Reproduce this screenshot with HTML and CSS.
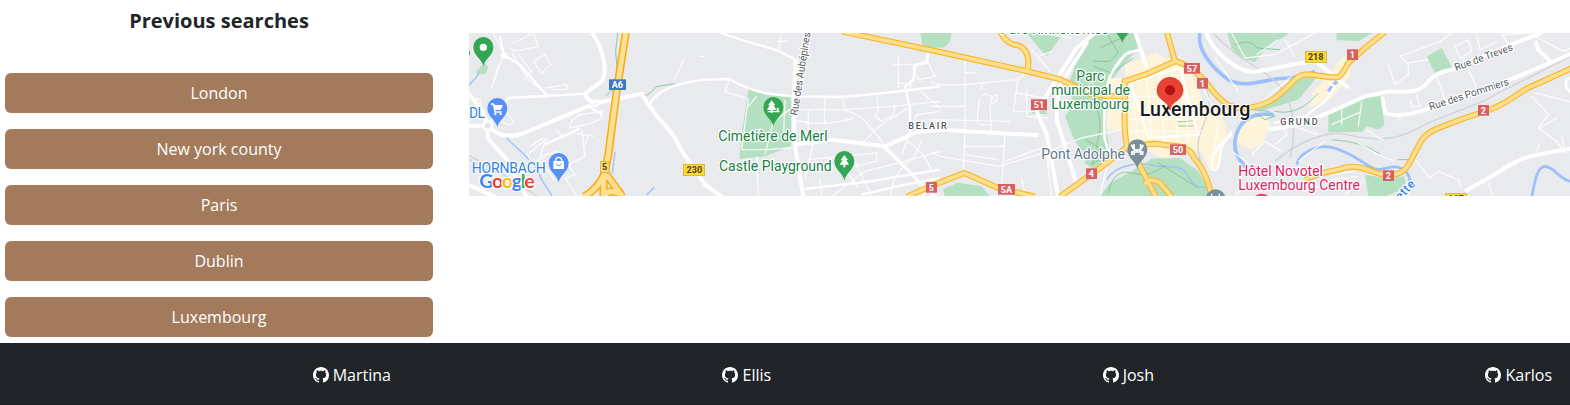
FILE: index.html
```html
<!DOCTYPE html>
<html lang="en">
<head>
<meta charset="utf-8">
<title>Previous searches</title>
<link rel="stylesheet" href="styles.css">
</head>
<body>
<main class="content">
  <section class="history">
    <h5 class="history-title">Previous searches</h5>
    <div class="history-list">
      <button class="city">London</button>
      <button class="city">New york county</button>
      <button class="city">Paris</button>
      <button class="city">Dublin</button>
      <button class="city">Luxembourg</button>
    </div>
  </section>
  <section class="map-panel">
    <svg class="map" viewBox="12 15 3303 489" preserveAspectRatio="none">
      <defs>
        <path id="pin" d="M0,58C-4,36 -30,26 -30,0A30,30 0 1 1 30,0C30,26 4,36 0,58Z"/>
        <path id="tree" d="M0,-19L11,-4H6L14,10H3V18H-3V10H-14L-6,-4H-11Z"/>
        <g id="main-roads">
          <path d="M1130,10L1425,72L1683,129L1785,154Q1830,175 1870,197L1930,205H1977"/>
          <path d="M1605,10Q1625,50 1660,52Q1700,70 1687,128"/>
          <path d="M1325,506L1400,473L1498,435L1600,480L1710,506"/>
          <path d="M1785,506L1925,405L1985,358L2010,385L2072,506M1986,355C1970,280 1985,230 1978,160L2040,140L2130,100L2105,10"/>
          <path d="M1992,360Q2070,340 2100,352Q2175,350 2187,390Q2225,430 2240,506"/>
          <path d="M2130,98Q2195,120 2240,185C2270,220 2290,243 2340,240C2410,235 2440,205 2485,160C2520,120 2550,150 2620,148Q2635,135 2650,105L2700,60L2760,12"/>
          <path d="M2040,470Q2050,445 2085,465L2120,506"/>
          <path d="M2520,455Q2560,435 2620,425C2680,400 2715,435 2760,440C2830,448 2835,395 2860,355C2880,305 2925,300 3000,270L3080,243C3150,215 3160,190 3200,175L3330,116"/>
        </g>
        <g id="motorway">
          <path d="M483,10L455,190L430,380L417,445L415,506"/>
          <path d="M417,440Q400,480 358,506M425,440L472,506M420,506Q425,478 472,500"/>
        </g>
      </defs>
      <rect class="land" x="12" y="15" width="3303" height="489"/>

      <g class="park">
        <path d="M40,122L60,105Q78,118 60,138L35,140V125L50,122Z"/>
        <path d="M850,183L908,202L978,207V355L900,385L823,392L830,320Z"/>
        <path d="M1365,10H1458Q1462,40 1440,57Q1410,65 1372,50Z"/>
        <path d="M1680,10H1800L1745,85L1714,50Z"/>
        <path d="M1830,85L1860,40L1900,10H2015L2028,55L1975,110L1930,170L1918,240L1925,310L1935,375L1885,425L1860,405V385L1825,330L1800,265L1825,230L1810,170L1825,130Z"/>
        <path d="M1695,245L1745,238V258H1705Z"/>
        <path d="M1435,483L1478,464L1550,475L1575,506H1440Z"/>
        <path d="M1905,506L1935,465L2000,430L2060,392L2145,390L2200,430L2245,506Z"/>
        <path d="M2285,10H2480L2400,65L2370,102L2325,90L2300,60Z"/>
        <path d="M2370,240L2450,190L2485,150L2535,130L2560,142L2500,215L2390,248Z"/>
        <path d="M2615,10H2730L2680,40L2615,36Z"/>
        <path d="M2885,85L2930,60L2962,120L2910,135Z"/>
        <path d="M2590,262L2695,210L2750,205L2758,290L2740,305L2705,295L2690,312L2590,312Z"/>
        <path d="M2700,440L2770,452L2818,445L2822,480L2760,506H2710Z"/>
      </g>
      <g class="town">
        <path d="M1980,110L2075,75L2100,92H2155L2195,170L2220,235L2270,260L2285,310L2260,425L2235,428L2210,370L2090,390L1985,340Z"/>
        <path d="M1930,150H1970V303L1925,305Z"/>
        <path d="M2315,300L2345,275L2405,250L2415,290L2395,345L2360,365L2330,355L2310,330Z"/>
        <path d="M2545,190L2595,135L2620,100L2655,70L2655,145L2600,210L2530,240Z"/>
      </g>

      <g class="water">
        <path d="M2205,15C2195,60 2235,115 2290,155C2345,185 2400,150 2470,150Q2520,145 2550,130"/>
        <path d="M2425,260C2350,250 2315,290 2310,340S2340,410 2360,440"/>
        <path class="stream" d="M1925,455C1960,400 2040,405 2065,412S2145,410 2160,430S2190,490 2230,475"/>
        <path class="narrow" d="M2495,410C2505,370 2560,350 2600,358C2660,372 2690,405 2720,418C2750,435 2770,410 2800,418Q2835,430 2835,465L2810,506"/>
        <path d="M2590,190L2615,160V145"/>
        <path class="narrow" d="M3200,506C3208,470 3215,415 3240,415C3275,420 3280,455 3320,460"/>
        <path class="stream" d="M8,175Q40,145 40,135M125,330C175,380 210,400 230,455L262,506M450,372L442,435M545,500L568,478"/>
      </g>

      <g class="rail">
        <path d="M2245,15C2300,80 2370,110 2425,155C2500,220 2490,330 2475,390"/>
        <path d="M2222,180C2260,250 2190,300 2200,370Q2205,410 2220,430M2430,400C2500,340 2560,320 2620,315C2690,330 2770,350 2850,305S3040,235 3100,195L3330,78"/>
        <path d="M-12,370L100,430L220,506M-12,380L80,435"/>
      </g>

      <g class="trail">
        <path d="M458,15L452,70L456,120L445,185L420,205M532,209Q560,195 575,176L628,167"/>
        <path d="M1885,100H1935L1960,75L1925,15M1885,115L1940,135L2005,90M1895,240Q1915,290 1895,350L1905,400M1860,335L1905,360L1880,410L1930,375M1905,60L1990,20"/>
        <path d="M2360,245L2410,250L2430,265L2400,275L2370,255M2430,250Q2500,265 2560,195M2140,294H2185M2135,282L2190,278M2310,50Q2360,30 2375,60L2445,65"/>
        <path d="M2600,335Q2690,340 2745,378M2798,395H2850M1930,495Q1945,420 2000,435T2100,412M2080,405L2200,480"/>
      </g>

      <g class="lane">
        <path d="M85,15L100,45L120,85M140,48L205,15L220,55L150,70L135,60M140,75L190,155L250,200M175,155L200,130L160,80M205,100L240,80L258,110L230,135L205,100M240,180L305,170L308,185H255M-12,200L45,215V270M100,110L80,180L110,95M-12,140L20,210"/>
        <path d="M105,265L120,245L145,280L135,292L105,280M190,380L245,330L225,385L280,370M185,375L200,405L245,385M195,355L235,330M315,300Q310,280 345,260L410,250V270L380,285L315,300M350,305L360,385L310,410L330,440L300,450L333,500M240,350L325,315L388,325M275,305L290,325M370,325L360,352M550,235Q580,180 660,165L720,155M628,155L658,92M230,400L270,460"/>
        <path d="M793,155L780,190L838,210M935,40H970M950,15L940,68M705,85H720M830,365H900L975,360M850,210L830,365M875,205L845,240M960,215L955,340M900,380L925,280L975,245M875,385L880,500M985,245H1110Q1170,245 1205,285T1290,390M1020,285Q1110,290 1165,270M1080,205L1078,285M1030,245V340M990,280H1030M1130,205L1140,245L1280,235L1425,220M1235,205Q1245,245 1230,265L1250,280L1285,260L1290,230M1300,80V180M1285,110H1360M1325,190L1340,170L1300,165M1345,120L1385,95L1410,145L1360,155Z"/>
        <path d="M1045,345L1020,450M1025,395L1235,375V400L1130,425M1090,390L1105,420M1065,450L1070,500M1180,480L1130,410M1100,506L1200,430L1320,400L1425,370M1170,400L1220,506M1260,355C1310,400 1350,430 1380,506M1280,506Q1270,450 1345,390L1370,335M1190,350L1230,305L1280,270L1330,240M1320,335Q1380,370 1400,430M1425,250L1355,260L1310,380M1365,190L1425,240M1400,65L1425,60"/>
        <path d="M1395,160Q1430,180 1550,165L1660,155L1685,130M1550,165V185M1500,85V135H1530M1500,140V310M1395,235H1500M1395,275L1635,280M1500,310L1495,435M1500,355H1620M1500,380L1600,395M1620,320L1610,480M1545,210Q1530,290 1545,290H1580M1550,200Q1590,190 1575,240L1580,310M1585,205Q1600,190 1595,220Q1570,235 1585,205M1660,145L1645,250H1720M1655,195L1735,210M1685,190V265L1750,270M1395,370L1425,385L1600,415L1750,370L1850,330L1990,300M1620,400L1730,360M1750,360V420H1770M1670,450L1680,500M1760,70L1720,85M1700,65L1755,130M1730,15L1820,30M1745,380L1760,506"/>
        <path d="M1930,150L1990,70L2030,65M1915,280L1930,400L1905,500M2000,170L2020,340M2045,150L2060,340M2080,140L2100,345M2120,125L2140,345M2155,130L2170,345M1990,205H2200M1990,240H2215M1990,275H2220M2005,310H2210M2200,150L2250,250M2260,280L2250,360M2290,320L2230,390M2300,15L2340,90L2430,80L2550,15M2250,90L2320,190M2375,80L2440,35M2460,35L2490,90M2380,230L2480,145M2430,350L2465,320L2450,290M2360,380L2400,340L2450,370M2310,500L2420,420M2560,480L2510,440M2600,440L2670,430M2500,400L2580,340M2560,320L2470,290M2350,405L2300,370"/>
        <path d="M2770,108L2790,170L2830,140V108L2805,85L2925,40L2960,15M2830,105L2890,95M2855,200L2865,235H2840L2835,215M2915,145L2940,215M2995,90L3035,180M3035,15L3045,65L3100,40M3135,55L3110,20L3200,15M2970,55L3010,35L3020,70L2985,90ZM3190,15L3295,70L3330,55M2805,260V280M2705,305L2740,330L2755,335M2680,345L2740,380L2790,400M2850,395L2895,450L2920,430L2980,455L2990,480M2600,455L2680,445M2640,500L2700,455M3200,205L3250,260L3220,300L3275,340L3300,375L3290,320M3225,300L3275,270M3210,195L3330,225M3215,370L3225,345M2600,290L2690,250M2630,245V290M2690,220L2680,295M3070,465L3085,506"/>
      </g>

      <g class="street">
        <path d="M378,10C415,60 430,130 410,160L362,195V205Q380,225 392,225L530,197Q545,225 580,270Q630,320 645,360L675,405L720,470L770,506"/>
        <path d="M365,197L130,210L68,290" class="small"/>
        <path d="M-12,293H50M68,293V330L130,400L145,435L185,506M68,293L95,315Q130,330 170,318L375,232M-12,460L90,506M-12,170L50,245L68,290"/>
        <path d="M392,227L415,215M375,230L382,242L410,258M240,348L312,317L345,300" class="small"/>
        <path d="M105,25L117,82L165,110L247,205L190,206" class="small"/>
        <path d="M550,235Q580,170 720,155L792,153Q850,185 900,195L980,205L1130,207L1260,195L1425,175" class="small"/>
        <path d="M765,15Q890,55 940,68L1000,100" class="small"/>
        <path d="M992,95L987,190L988,340L1015,506M985,350L1100,335L1260,355L1355,312L1425,305L1720,322"/>
        <path d="M1390,75L1385,105L1350,110L1345,155L1320,175L1335,240V315" class="small"/>
        <path d="M1190,500L1320,470L1425,450M1020,483L1215,460L1425,425M1255,357L1410,506" class="small"/>
        <path d="M1890,15L1835,60L1780,145L1715,250L1745,320L1780,506M1868,40L1780,180L1775,275L1835,470"/>
        <path d="M2010,10L2045,120"/>
        <path d="M1990,165L2145,120L2165,200L2200,320L2050,330L1995,160M2030,62L1980,80Q1920,140 1918,230V330L1940,400" class="small"/>
        <path d="M2225,15C2240,70 2320,135 2370,132L2480,110L2550,98L2650,180M2410,305L2500,290L2600,250L2700,205L2770,190C2860,195 2870,185 2895,155Q2920,130 2960,125L3150,45L3230,15"/>
        <path d="M2752,205L2760,255Q2800,270 2875,247L3135,155L3255,105L3330,72M3212,40L3220,65L3260,103M3000,490L3080,445Q3150,400 3180,390T3330,360"/>
        <path d="M2590,165L2610,175L2580,220L2520,265L2425,285M2300,320Q2225,380 2245,425Q2265,430 2268,360L2300,310M3330,155Q3295,140 3305,180L3330,210" class="small"/>
      </g>

      <use href="#main-roads" class="main-edge"/>
      <use href="#main-roads" class="main-fill"/>
      <use href="#motorway" class="motorway-edge"/>
      <use href="#motorway" class="motorway-fill"/>
      <circle class="roundabout" cx="68" cy="293" r="13"/>
      <circle class="roundabout" cx="392" cy="226" r="8"/>
      <circle class="roundabout" cx="117" cy="84" r="5"/>

      <g class="shield red">
        <rect x="1383" y="462" width="33" height="32"/><text x="1399" y="488">5</text>
        <rect x="1698" y="214" width="48" height="32"/><text x="1722" y="240">51</text>
        <rect x="1599" y="468" width="51" height="32"/><text x="1624" y="494">5A</text>
        <rect x="1863" y="421" width="33" height="32"/><text x="1879" y="447">4</text>
        <rect x="2157" y="105" width="48" height="32"/><text x="2181" y="131">57</text>
        <rect x="2196" y="150" width="33" height="32"/><text x="2212" y="176">1</text>
        <rect x="2115" y="349" width="48" height="32"/><text x="2139" y="375">50</text>
        <rect x="2646" y="64" width="33" height="32"/><text x="2662" y="90">1</text>
        <rect x="3039" y="231" width="33" height="32"/><text x="3055" y="257">2</text>
        <rect x="2754" y="427" width="33" height="32"/><text x="2770" y="453">2</text>
      </g>
      <g class="shield blue"><rect x="432" y="154" width="51" height="32"/><text x="457" y="180">A6</text></g>
      <g class="shield yellow">
        <rect class="pale" x="406" y="400" width="26" height="34"/><text x="419" y="426">5</text>
        <rect x="655" y="409" width="64" height="34"/><text x="688" y="435">230</text>
        <rect x="2521" y="70" width="63" height="34"/><text x="2552" y="96">218</text>
        <rect x="2942" y="496" width="62" height="34"/><text x="2973" y="522">117</text>
      </g>

      <g class="label green">
        <text x="760" y="339" textLength="328">Cimetière de Merl</text>
        <text x="762" y="429" textLength="338">Castle Playground</text>
        <text x="1834" y="159" textLength="84">Parc</text>
        <text x="1759" y="201" textLength="236">municipal de</text>
        <text x="1759" y="243" textLength="233">Luxembourg</text>
        <text x="1606" y="19" textLength="326">Parc Kinnekswiss</text>
      </g>
      <g class="label blue">
        <text x="12" y="270" textLength="48">DL</text>
        <text x="20" y="434" textLength="222">HORNBACH</text>
        <text class="river" transform="translate(2805 519) rotate(-46)" textLength="68">ette</text>
      </g>
      <g class="label slate"><text x="1729" y="393" textLength="251">Pont Adolphe</text></g>
      <g class="label pink">
        <text x="2320" y="444" textLength="254">Hôtel Novotel</text>
        <text x="2320" y="486" textLength="365">Luxembourg Centre</text>
      </g>
      <g class="label area">
        <text x="1330" y="304" textLength="115">BELAIR</text>
        <text x="2446" y="292" textLength="112">GRUND</text>
      </g>
      <g class="label road">
        <text transform="translate(997 263) rotate(-81)" textLength="252">Rue des Aubépines</text>
        <text transform="translate(2973 129) rotate(-20)" textLength="184">Rue de Treves</text>
        <text transform="translate(2896 247) rotate(-18)" textLength="250">Rue des Pommiers</text>
      </g>

      <g class="pin-green">
        <use href="#pin" x="55" y="57"/><circle class="glyph" cx="55" cy="58" r="11"/>
        <use href="#pin" x="925" y="237"/><use href="#tree" class="glyph" x="920" y="236"/><path class="glyph" d="M908,249H944V253H908ZM935,240H941V252H935Z"/>
        <use href="#pin" x="1138" y="399"/><use href="#tree" class="glyph" x="1138" y="400"/>
        <use href="#pin" x="1972" y="-13"/>
        <circle cx="6" cy="75" r="9"/>
      </g>
      <g class="pin-blue">
        <use href="#pin" x="97" y="240"/>
        <path class="glyph" d="M78,226H86L90,231H114L107,246H91L92,250H110V254H88L84,231H78Z"/><circle class="glyph" cx="91" cy="258" r="3.5"/><circle class="glyph" cx="107" cy="258" r="3.5"/>
        <use href="#pin" x="281" y="405"/>
        <path class="glyph" d="M265,399H297V423H265Z"/><path class="glyph-line" d="M272,400V397A9,9 0 0 1 290,397V400"/><path class="smile" d="M273,407Q281,420 289,407"/>
      </g>
      <g class="pin-slate">
        <use href="#pin" x="2017" y="364"/>
        <path class="glyph-line bridge" d="M2007,348V381M2027,348V381M1998,372H2036M1999,350Q2004,362 2007,363Q2017,370 2027,363Q2031,361 2035,350M2001,372V381M2033,372V381M2017,366V372"/>
        <use href="#pin" x="2252" y="514"/>
        <path class="glyph-line" d="M2240,497V506M2263,497V506"/>
      </g>
      <circle class="pin-pink" cx="2390" cy="527" r="30"/>

      <text class="city-name" x="2024" y="264" textLength="332">Luxembourg</text>
      <path class="marker" d="M2115,246C2110,218 2076,218 2076,187A39,39 0 1 1 2154,187C2154,218 2120,218 2115,246Z"/>
      <circle class="marker-dot" cx="2115" cy="187" r="15"/>
      <text class="brand" x="43" y="480" textLength="166"><tspan class="b">G</tspan><tspan class="r">o</tspan><tspan class="y">o</tspan><tspan class="b">g</tspan><tspan class="g">l</tspan><tspan class="r">e</tspan></text>
    </svg>
  </section>
</main>
<footer class="footer">
  <svg class="sprite"><symbol id="github" viewBox="0 0 16 16"><path d="M8 0C3.58 0 0 3.58 0 8c0 3.54 2.29 6.53 5.47 7.59.4.07.55-.17.55-.38 0-.19-.01-.82-.01-1.49-2.01.37-2.53-.49-2.69-.94-.09-.23-.48-.94-.82-1.13-.28-.15-.68-.52-.01-.53.63-.01 1.08.58 1.23.82.72 1.21 1.87.87 2.33.66.07-.52.28-.87.51-1.07-1.78-.2-3.64-.89-3.64-3.95 0-.87.31-1.59.82-2.15-.08-.2-.36-1.02.08-2.12 0 0 .67-.21 2.2.82.64-.18 1.32-.27 2-.27s1.36.09 2 .27c1.53-1.04 2.2-.82 2.2-.82.44 1.1.16 1.92.08 2.12.51.56.82 1.27.82 2.15 0 3.07-1.87 3.75-3.65 3.95.29.25.54.73.54 1.48 0 1.07-.01 1.93-.01 2.2 0 .21.15.46.55.38A8.01 8.01 0 0 0 16 8c0-4.42-3.58-8-8-8"/></symbol></svg>
  <a class="author"><svg class="icon"><use href="#github"/></svg>Martina</a>
  <a class="author"><svg class="icon"><use href="#github"/></svg>Ellis</a>
  <a class="author"><svg class="icon"><use href="#github"/></svg>Josh</a>
  <a class="author"><svg class="icon"><use href="#github"/></svg>Karlos</a>
</footer>
</body>
</html>
```
FILE: styles.css
```css
* { box-sizing: border-box; }
body {
  margin: 0;
  height: 405px;
  overflow: hidden;
  display: flex;
  flex-direction: column;
  background: #fff;
  color: #212529;
  font: 16px/24px "Open Sans", "Noto Sans", sans-serif;
}
.content { display: flex; height: 343px; }
.history { width: 469px; padding: 9px 36px 0 5px; }
.history-title { margin: 0 0 40px; font-size: 20px; line-height: 24px; font-weight: 700; text-align: center; }
.history-list { display: grid; gap: 16px; }
.city {
  height: 40px;
  padding: 0;
  border: 0;
  border-radius: 6px;
  background: #a37b5c;
  color: #fff;
  font: inherit;
}
.map-panel { flex: 1; padding-top: 33px; }
.map { display: block; width: 1101px; height: 163px; font-family: Roboto, sans-serif; }
.footer {
  flex: 1;
  display: flex;
  justify-content: flex-end;
  align-items: center;
  gap: 331.5px;
  padding: 2px 18px 0 0;
  background: #212529;
  border-bottom: 1px solid #1a1d20;
  color: #fff;
}
.author { display: flex; align-items: center; gap: 4px; }
.icon { width: 16px; height: 16px; fill: #fff; }
.sprite { position: absolute; width: 0; height: 0; }

.land { fill: #e8eaed; }
.park { fill: #b4dfc1; }
.town { fill: #fdf4d9; }
.water { fill: none; stroke: #9cc0f9; stroke-width: 11; }
.water .narrow { stroke-width: 8; }
.water .stream { stroke-width: 4; }
.rail { fill: none; stroke: #d0d2d5; stroke-width: 4; }
.trail { fill: none; stroke: #7cc294; stroke-width: 2.5; }
.lane { fill: none; stroke: #fff; stroke-width: 4; opacity: .85; }
.street { fill: none; stroke: #fff; stroke-width: 12; stroke-linejoin: round; }
.street .small { stroke-width: 7; }
.main-edge, .main-fill, .motorway-edge, .motorway-fill { fill: none; stroke-linejoin: round; }
.main-edge { stroke: #f9b62c; stroke-width: 18; }
.main-fill { stroke: #fddf8c; stroke-width: 11; }
.motorway-edge { stroke: #f9ab13; stroke-width: 24; }
.motorway-fill { stroke: #fee095; stroke-width: 15; }
.roundabout { fill: #e2e4e8; stroke: #fff; stroke-width: 9; }

.shield { font-size: 27px; font-weight: 700; text-anchor: middle; fill: #fff; }
.shield.red rect { fill: #d96062; }
.shield.blue rect { fill: #3f77c4; }
.shield.yellow { fill: #4b4320; }
.shield.yellow rect { fill: #fdd835; stroke: #c9ab30; stroke-width: 2; }
.shield.yellow .pale { fill: #fbdb72; }

.label { font-size: 42px; paint-order: stroke; stroke: #fff; stroke-width: 7; stroke-linejoin: round; }
.label.green { fill: #188045; }
.label.blue { fill: #2f80ed; }
.label.slate { fill: #60788a; }
.label.pink { fill: #e0225f; }
.label.area { font-size: 27px; font-weight: 500; fill: #4f555b; }
.label.road { font-size: 31px; fill: #55595e; }
.label .river { font-size: 36px; font-weight: 500; }
.city-name { font-size: 59px; font-weight: 500; fill: #17191c; paint-order: stroke; stroke: #fff; stroke-width: 6; }

.pin-green { fill: #34a552; }
.pin-blue { fill: #5590f5; }
.pin-slate { fill: #78909c; }
.pin-pink { fill: #ec407a; }
.glyph { fill: #fff; }
.glyph-line { fill: none; stroke: #fff; stroke-width: 4; }
.bridge { stroke-width: 5; }
.smile { fill: none; stroke: #5590f5; stroke-width: 3; }
.marker { fill: #ea4335; stroke: #c5372c; stroke-width: 2; }
.marker-dot { fill: #b11313; }

.brand { font-family: Lato, sans-serif; font-size: 58px; font-weight: 700; paint-order: stroke; stroke: #fff; stroke-width: 8; }
.brand .b { fill: #4285f4; }
.brand .r { fill: #ea4335; }
.brand .y { fill: #fbbc05; }
.brand .g { fill: #34a853; }
```
